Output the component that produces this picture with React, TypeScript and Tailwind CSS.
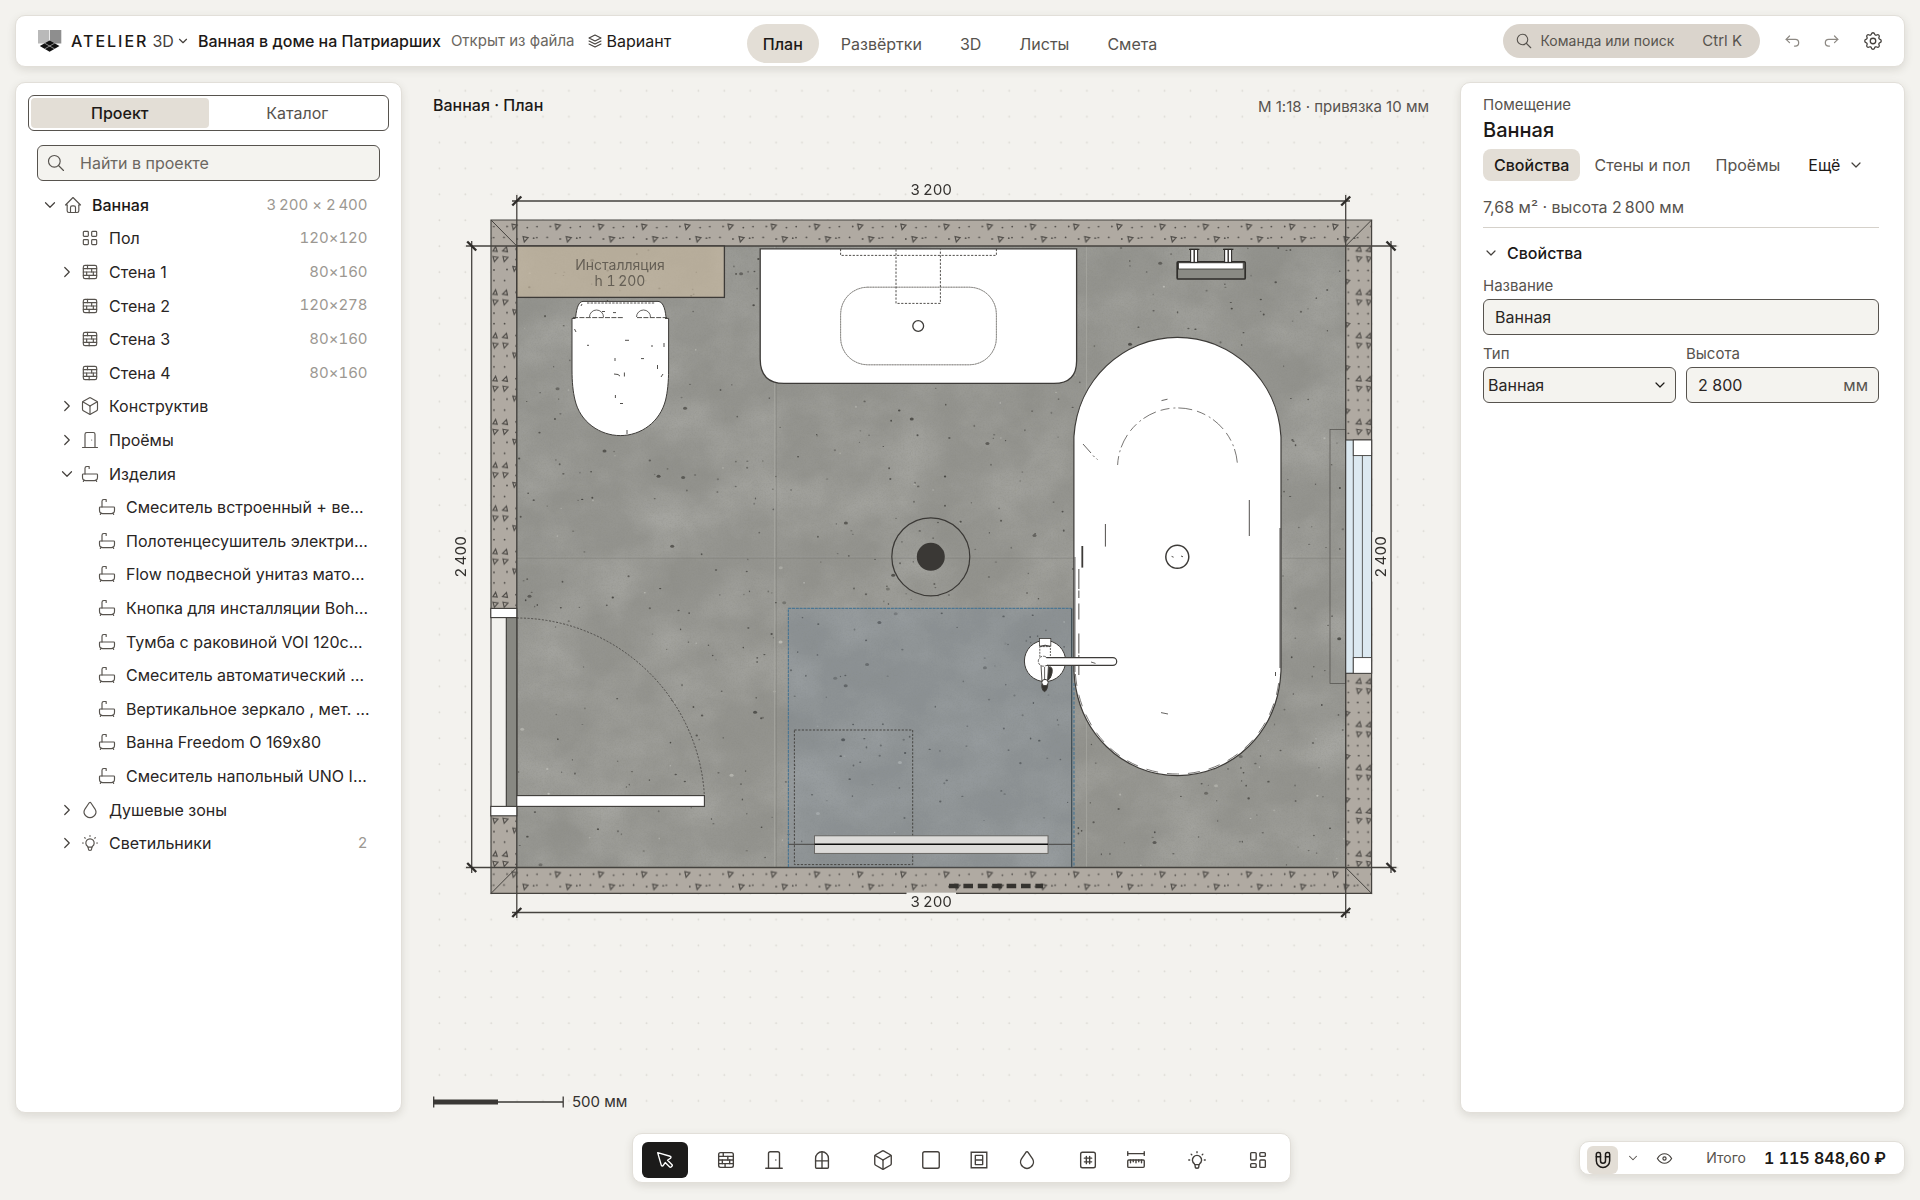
import type { ReactNode } from "react";
import {
  TbArrowBackUp,
  TbArrowForwardUp,
  TbBath,
  TbBulb,
  TbChevronDown,
  TbChevronRight,
  TbCube,
  TbDoor,
  TbDroplet,
  TbEye,
  TbHome,
  TbLayoutDashboard,
  TbLayoutGrid,
  TbMagnet,
  TbPointer,
  TbRulerMeasure,
  TbSearch,
  TbSettings,
  TbSquare,
  TbStack2,
  TbWall,
  TbWindow,
} from "react-icons/tb";

const panel = "rounded-[10px] border border-[#e2dfd9] bg-white shadow-[0_3px_8px_rgba(60,52,40,0.13)]";

/* ---------- Header ---------- */

function Logo() {
  return (
    <svg width="24" height="22" viewBox="0 0 24 22" aria-hidden="true">
      <rect x="0" y="0" width="11.3" height="13.5" fill="#b9b9b9" />
      <rect x="12" y="0" width="11.3" height="13.5" fill="#8e8e8e" />
      <path d="M11.6 10.4 21.5 16 11.6 21.8 1.8 16z" fill="#111" />
      <path d="M6.7 13.2l9.9 5.7M16.6 13.2l-9.9 5.7" stroke="#fff" strokeWidth="0.5" />
    </svg>
  );
}

const views = ["План", "Развёртки", "3D", "Листы", "Смета"];

function Header() {
  return (
    <header className={`${panel} grid h-[52px] grid-cols-[1fr_auto_1fr] items-center`}>
      <div className="flex items-center pl-[22px]">
        <button className="flex items-center text-base font-medium">
          <Logo />
          <span className="ml-[9px] tracking-[2px]">ATELIER</span>
          <span className="ml-1 text-base font-normal text-[#44403c]">3D</span>
          <TbChevronDown size={14} strokeWidth={2} className="ml-[2px] text-[#44403c]" />
        </button>
        <h1 className="ml-2 text-base font-medium whitespace-nowrap">Ванная в доме на Патриарших</h1>
        <span className="ml-[10px] text-[15px] whitespace-nowrap text-[#6b6761]">Открыт из файла</span>
        <button className="ml-3 flex items-center gap-[2px] text-base">
          <TbStack2 size={18} strokeWidth={1.4} className="text-[#44403c]" />
          Вариант
        </button>
      </div>
      <nav className="mb-[3px] flex gap-[6px] self-end">
        {views.map((view) => (
          <button
            key={view}
            className={`h-[39px] rounded-full px-4 text-base ${
              view === "План" ? "bg-[#e3ded6] font-medium text-[#1c1917]" : "text-[#57534e]"
            }`}
          >
            {view}
          </button>
        ))}
      </nav>
      <div className="flex items-center justify-end pr-[10px]">
        <button className="flex h-[34px] items-center rounded-full bg-[#dad4cc] pr-[18px] pl-3 text-sm text-[#57534e]">
          <TbSearch size={18} strokeWidth={1.5} />
          <span className="ml-2">Команда или поиск</span>
          <kbd className="ml-7 font-[inherit] text-[15px]">Ctrl K</kbd>
        </button>
        <button aria-label="Отменить" className="ml-3 grid size-10 place-items-center text-[#8d8983]">
          <TbArrowBackUp size={20} strokeWidth={1.5} />
        </button>
        <button aria-label="Повторить" className="grid size-10 place-items-center text-[#8d8983]">
          <TbArrowForwardUp size={20} strokeWidth={1.5} />
        </button>
        <button aria-label="Настройки" className="grid h-10 w-[42px] place-items-center text-[#44403c]">
          <TbSettings size={22} strokeWidth={1.4} />
        </button>
      </div>
    </header>
  );
}

/* ---------- Left panel ---------- */

type TreeRow = {
  label: string;
  icon: typeof TbHome;
  level: 0 | 1 | 2;
  open?: boolean;
  meta?: string;
};

const tree: TreeRow[] = [
  { label: "Ванная", icon: TbHome, level: 0, open: true, meta: "3\u2009200 × 2\u2009400" },
  { label: "Пол", icon: TbLayoutGrid, level: 1, meta: "120×120" },
  { label: "Стена 1", icon: TbWall, level: 1, open: false, meta: "80×160" },
  { label: "Стена 2", icon: TbWall, level: 1, meta: "120×278" },
  { label: "Стена 3", icon: TbWall, level: 1, meta: "80×160" },
  { label: "Стена 4", icon: TbWall, level: 1, meta: "80×160" },
  { label: "Конструктив", icon: TbCube, level: 1, open: false },
  { label: "Проёмы", icon: TbDoor, level: 1, open: false },
  { label: "Изделия", icon: TbBath, level: 1, open: true },
  { label: "Смеситель встроенный + ве…", icon: TbBath, level: 2 },
  { label: "Полотенцесушитель электри…", icon: TbBath, level: 2 },
  { label: "Flow подвесной унитаз мато…", icon: TbBath, level: 2 },
  { label: "Кнопка для инсталляции Boh…", icon: TbBath, level: 2 },
  { label: "Тумба с раковиной VOI 120с…", icon: TbBath, level: 2 },
  { label: "Смеситель автоматический …", icon: TbBath, level: 2 },
  { label: "Вертикальное зеркало , мет. …", icon: TbBath, level: 2 },
  { label: "Ванна Freedom O 169x80", icon: TbBath, level: 2 },
  { label: "Смеситель напольный UNO I…", icon: TbBath, level: 2 },
  { label: "Душевые зоны", icon: TbDroplet, level: 1, open: false },
  { label: "Светильники", icon: TbBulb, level: 1, open: false, meta: "2" },
];

const indent = ["pl-6", "pl-[41px]", "pl-[58px]"];

function ProjectPanel() {
  return (
    <aside className={`${panel} w-[387px] shrink-0 pt-3`}>
      <div className="mx-3 grid h-9 grid-cols-2 rounded-md border border-[#57534e] p-[2px] text-base">
        <button className="rounded bg-[#e3ded6] font-medium">Проект</button>
        <button className="text-[#57534e]">Каталог</button>
      </div>
      <label className="mx-[21px] mt-[14px] flex h-9 items-center rounded-md border border-[#57534e] bg-[#f4f3ef] pl-2">
        <TbSearch size={20} strokeWidth={1.4} className="shrink-0 text-[#57534e]" />
        <input
          aria-label="Найти в проекте"
          placeholder="Найти в проекте"
          className="ml-[14px] w-full bg-transparent text-base outline-none placeholder:text-[#6b6761]"
        />
      </label>
      <ul className="mt-[7px] grid min-h-[672px] auto-rows-fr">
        {tree.map((row, i) => {
          const Icon = row.icon;
          return (
            <li key={i} className={`flex items-center pr-9 text-base ${indent[row.level]}`}>
              <span className="grid w-5 place-items-center text-[#44403c]">
                {row.open === true && <TbChevronDown size={18} strokeWidth={1.6} />}
                {row.open === false && <TbChevronRight size={18} strokeWidth={1.6} />}
              </span>
              <Icon size={20} strokeWidth={1.4} className="ml-[3px] shrink-0 text-[#57534e]" />
              <span
                className={`ml-[9px] whitespace-nowrap ${
                  row.level === 0 ? "font-medium text-[#1c1917]" : "text-[#292524]"
                }`}
              >
                {row.label}
              </span>
              {row.meta && <span className="mr-[2px] ml-auto text-[15px] text-[#9c9892] tabular-nums">{row.meta}</span>}
            </li>
          );
        })}
      </ul>
    </aside>
  );
}

/* ---------- Plan drawing ---------- */

// small LCG so that the concrete looks the same on every render
function makeSpecks(count: number) {
  let seed = 7;
  const next = () => {
    seed = (seed * 16807) % 2147483647;
    return seed / 2147483647;
  };
  return Array.from({ length: count }, () => {
    const big = next();
    return {
      x: 518 + next() * 826,
      y: 248 + next() * 618,
      rx: big > 0.93 ? 2 : 0.6 + big * 0.7,
      ry: big > 0.93 ? 1.5 : 0.5 + next() * 0.6,
      light: next() > 0.92,
      o: 0.35 + next() * 0.5,
    };
  });
}

const specks = makeSpecks(760);

function Tick({ x, y, flip }: { x: number; y: number; flip?: boolean }) {
  return flip ? (
    <path d={`M${x - 4.5} ${y - 4.5}l9 9`} stroke="#2f2d2a" strokeWidth="2.4" />
  ) : (
    <path d={`M${x - 4.5} ${y + 4.5}l9 -9`} stroke="#2f2d2a" strokeWidth="2.4" />
  );
}

function HatchDefs() {
  const tri = { fill: "none", stroke: "#514e4a", strokeWidth: 1.2 };
  return (
    <defs>
      <pattern id="hatchTop" patternUnits="userSpaceOnUse" x="535.8" y="220" width="43.2" height="26">
        <path d="M19.5 4.2l5 1-3.8 4.4zM30.5 16.6l5 1-3.8 4.400z" {...tri} />
        <g fill="#514e4a">
          <circle cx="14.5" cy="6.5" r="0.9" />
          <circle cx="34.7" cy="7.6" r="0.9" />
          <circle cx="1.2" cy="6.6" r="0.9" />
          <circle cx="1" cy="17.6" r="0.9" />
          <circle cx="11.4" cy="17.4" r="0.9" />
          <circle cx="24.4" cy="19" r="0.9" />
          <circle cx="41" cy="18.2" r="0.9" />
        </g>
      </pattern>
      <pattern id="hatchBottom" href="#hatchTop" y="867.6" />
      <pattern id="hatchLeft" patternUnits="userSpaceOnUse" x="491" y="243.5" width="26" height="43.2">
        <path d="M2 7.5l2.6-4.400 1.6 4.800zM11.5 7.5l4-4 1 4.800zM2 13l5 1-3.6 4.2zM12 13l5 1-3.800 4.2zM21.8 23l4 .6-2.6 4.2z" {...tri} />
        <g fill="#514e4a">
          <circle cx="25" cy="5.6" r="0.9" />
          <circle cx="25" cy="16" r="0.9" />
          <circle cx="3" cy="26.5" r="0.9" />
          <circle cx="16" cy="26" r="0.9" />
          <circle cx="3" cy="37" r="0.9" />
          <circle cx="13.6" cy="37" r="0.9" />
        </g>
      </pattern>
      <pattern id="hatchRight" patternUnits="userSpaceOnUse" x="1345.7" y="243.5" width="26" height="43.2">
        <path d="M10.5 7.5l3.6-4.400 1.4 4.800zM20.5 7.5l4-4 .6 4.800zM11 13l5 1-3.6 4.2zM21 13l4.4 1-3 4.2zM0 35.6l4 1.2-3 3.6z" {...tri} />
        <g fill="#514e4a">
          <circle cx="2.6" cy="5.6" r="0.9" />
          <circle cx="2.6" cy="17" r="0.9" />
          <circle cx="12" cy="27" r="0.9" />
          <circle cx="22.4" cy="27" r="0.9" />
          <circle cx="2.6" cy="27" r="0.9" />
          <circle cx="13" cy="37" r="0.9" />
          <circle cx="22.6" cy="37" r="0.9" />
        </g>
      </pattern>
      <pattern id="dots" patternUnits="userSpaceOnUse" x="504.7" y="233" width="25.9" height="25.9">
        <circle cx="12.4" cy="13.2" r="0.9" fill="#dcdad4" />
      </pattern>
      <filter id="mottle" x="0" y="0" width="1" height="1">
        <feTurbulence type="fractalNoise" baseFrequency="0.014 0.017" numOctaves="5" seed="11" />
        <feColorMatrix values="0 0 0 0 1  0 0 0 0 1  0 0 0 0 0.97  1.1 0 0 0 -0.4" />
      </filter>
      <filter id="shade" x="0" y="0" width="1" height="1">
        <feTurbulence type="fractalNoise" baseFrequency="0.02" numOctaves="4" seed="4" />
        <feColorMatrix values="0 0 0 0 0.2  0 0 0 0 0.2  0 0 0 0 0.18  0 1.1 0 0 -0.4" />
      </filter>
      <filter id="grain" x="0" y="0" width="1" height="1">
        <feTurbulence type="fractalNoise" baseFrequency="0.6" numOctaves="2" seed="2" />
        <feColorMatrix values="0 0 0 0 0.25  0 0 0 0 0.25  0 0 0 0 0.22  0 0 1.2 0 -0.5" />
      </filter>
    </defs>
  );
}

function Floor() {
  return (
    <g>
      <rect x="506" y="246" width="839.7" height="621.6" fill="#959590" />
      <rect x="506" y="246" width="839.7" height="621.6" filter="url(#mottle)" opacity="0.28" />
      <rect x="506" y="246" width="839.7" height="621.6" filter="url(#shade)" opacity="0.34" />
      <rect x="506" y="246" width="839.7" height="621.6" filter="url(#grain)" opacity="0.5" />
      {specks.map((s, i) => (
        <ellipse key={i} cx={s.x} cy={s.y} rx={s.rx} ry={s.ry} fill={s.light ? "#c4c4be" : "#3c3b37"} opacity={s.o} />
      ))}
      <g stroke="#a5a59f" strokeWidth="1" opacity="0.8">
        <path d="M774.5 246V867.5M1086.5 246V867.5" />
        <path d="M517 556.8H1345.7" opacity="0.35" />
      </g>
      <path d="M776.5 246V867.5M517 558.3H1345.7" stroke="#7b7b75" opacity="0.4" />
    </g>
  );
}

function Walls() {
  return (
    <g>
      <path fill="#b0aaa2" fillRule="evenodd" d="M491 220H1371.6V893.4H491zM516.8 246V867.5H1345.7V246z" />
      <rect x="491" y="220" width="880.6" height="26" fill="url(#hatchTop)" />
      <rect x="491" y="867.5" width="880.6" height="26" fill="url(#hatchBottom)" />
      <rect x="491" y="246" width="25.8" height="621.5" fill="url(#hatchLeft)" />
      <rect x="1345.7" y="246" width="25.9" height="621.5" fill="url(#hatchRight)" />
      <g fill="none" stroke="#45433f" strokeWidth="1.2">
        <path d="M491 220H1371.6V893.4H491z" />
        <path d="M516.8 246H1345.7V867.5H516.8z" strokeWidth="1.4" />
        <path d="M491 220l25.8 26M1371.6 220l-25.9 26M491 893.4l25.8-25.9M1371.6 893.4l-25.9-25.9" strokeWidth="1" />
      </g>
      <path d="M949 886h94" stroke="#35332f" strokeWidth="4.4" strokeDasharray="9.6 4.8" />
    </g>
  );
}

function DoorAndWindow() {
  return (
    <g stroke="#3d3b38" strokeWidth="1.1">
      {/* door */}
      <rect x="490" y="617" width="16.3" height="190" fill="#f3f2ee" stroke="none" />
      <rect x="506.3" y="617" width="10.4" height="190" fill="#888882" stroke="none" />
      <path d="M491 617v190M506.3 617v190M516.8 617v190" fill="none" />
      <rect x="490.8" y="608.4" width="26" height="9.2" fill="#fff" />
      <rect x="490.8" y="806.4" width="26" height="9.4" fill="#fff" />
      <path d="M516.8 618A188 188 0 0 1 704.4 796" fill="none" strokeDasharray="2 1.6" strokeWidth="0.8" />
      <rect x="516.8" y="795.6" width="187.6" height="10.8" fill="#fff" />
      {/* window */}
      <rect x="1330" y="429.5" width="15.7" height="254" fill="none" strokeWidth="0.7" opacity="0.8" />
      <rect x="1345.7" y="440" width="25.9" height="233.3" fill="#dce9f1" />
      <path d="M1353.3 440v233M1362.4 455v203" strokeWidth="0.8" />
      <rect x="1353.3" y="440" width="18.3" height="15.6" fill="#fff" strokeWidth="0.9" />
      <rect x="1353.3" y="657.6" width="18.3" height="15.7" fill="#fff" strokeWidth="0.9" />
    </g>
  );
}

function Installation() {
  return (
    <g>
      <rect x="516.8" y="246" width="207.6" height="51.4" fill="#cdbda3" fillOpacity="0.62" stroke="#3d3b38" strokeWidth="1.3" />
      <g className="tabular-nums" fill="#655f55" fontSize="14" textAnchor="middle">
        <text x="620" y="270">Инсталляция</text>
        <text x="620" y="286">{"h 1\u2009200"}</text>
      </g>
    </g>
  );
}

function Toilet() {
  return (
    <g fill="#fff" stroke="#3d3b38" strokeWidth="1">
      <path d="M575.5 319C576 312 577.5 301.4 583 301.4H658C664 301.4 665.6 312 666.2 319" />
      <path d="M575 318.4H572V370C572 382 573 392 575 400C580 422 600 435.6 620.3 435.6C641 435.6 660 422 665.6 400C667.5 392 668.6 382 668.6 370V318.4H665" />
      <g fill="none" strokeWidth="0.9">
        <path d="M587 303h68" strokeDasharray="2.4 1.2" />
        <path d="M573 317.6h50M637 317.6h30" strokeDasharray="5 1.4" />
        <path d="M589.5 317a7 7 0 0 1 14 0M636.5 317a7 7 0 0 1 14 0" strokeWidth="0.8" />
        <path d="M602 311.5h3M613 312.6h3M625 340.3h4M587 345.3h2M651 346h2M664 343v4M615 358v3M641 358.6h3M657.5 365v4M614 374l4 .5 2 1.6M624.4 372.5v4M661 377l2-3M574.5 329l1.5 3M615.4 395v3M620 403.5h3M627 430v4M581 306l1-2" />
      </g>
    </g>
  );
}

function Vanity() {
  return (
    <g fill="#fff" stroke="#3d3b38" strokeWidth="1.3">
      <path d="M760.2 248.8H1076.6V361Q1076.6 383.4 1054 383.4H784Q760.2 383.4 760.2 359z" />
      <g fill="none" strokeWidth="0.9">
        <rect x="840.6" y="287.2" width="155.8" height="77.6" rx="27" stroke="#6b6964" strokeWidth="0.6" />
        <rect x="840.6" y="287.2" width="155.8" height="77.6" rx="27" stroke="#6b6964" strokeDasharray="1.2 1.4" opacity="0.6" />
        <path d="M840.6 249v6.4H996.4V249M896 249.4v54H940.4v-54" strokeDasharray="2.2 1.5" />
        <circle cx="918.2" cy="326" r="5.4" strokeWidth="1.3" />
      </g>
    </g>
  );
}

function TowelRail() {
  return (
    <g stroke="#2f2d2a">
      <rect x="1177.2" y="261.8" width="68" height="17.2" rx="1" fill="#8a8a84" strokeWidth="1.7" />
      <rect x="1178.6" y="262.8" width="64.6" height="6.2" fill="#fff" strokeWidth="0.8" />
      <g fill="#fff" strokeWidth="1.1">
        <rect x="1190.6" y="249.4" width="7" height="13" />
        <rect x="1224.6" y="249.4" width="7" height="13" />
      </g>
      <path d="M1189 249.4h10.4M1223 249.4h10.4M1194.2 250v12M1228.2 250v12" strokeWidth="1.4" />
    </g>
  );
}

function Bathtub() {
  return (
    <g fill="none" stroke="#3d3b38" strokeWidth="0.9">
      <path d="M1073.9 437.5C1077 380 1123 337.4 1177.4 337.4C1232 337.4 1278 380 1281 437.5V671C1278 733 1232 775.6 1177.4 775.6C1123 775.6 1077 733 1073.9 671z" fill="#fff" strokeWidth="1.2" />
      <path d="M1075.4 674C1080 733 1124 774 1177.4 774C1231 774 1276 732 1279.6 674" strokeDasharray="12 9" strokeWidth="0.7" />
      <path d="M1117.6 465A60 60 0 0 1 1237.4 464" strokeDasharray="9 4 2 3 14 5" strokeWidth="0.7" />
      <path d="M1083 444l8 9M1093 455.5l1.5 1.5M1096.5 458.6l1 1M1161.5 400.6l6-1.4M1161 712.6l7 1.4" strokeWidth="0.8" />
      <path d="M1105.4 524v22.6M1249.3 500v36M1280 528v140" />
      <path d="M1082.3 546v21.6" strokeWidth="1.8" />
      <path d="M1075 557v115" strokeWidth="1" opacity="0.7" />
      <path d="M1078.8 569v29M1078.8 603.5v16M1078.8 633.5v42" strokeWidth="1.4" opacity="0.65" strokeDasharray="20 1.5" />
      <path d="M1275.5 672v4" />
      <circle cx="1177.3" cy="556.8" r="11.5" strokeWidth="1.5" />
      <path d="M1171.6 556.4l2 .8M1181 556l2 .8" />
    </g>
  );
}

function Shower() {
  return (
    <g fill="none">
      <rect x="788.4" y="608.4" width="285.4" height="259" fill="#738ba2" fillOpacity="0.24" />
      <path d="M788.4 867V608.4H1071.7" stroke="#4b7692" strokeWidth="1.2" strokeDasharray="3 0.8" />
      <path d="M1071.7 608.4V867" stroke="#3b4a52" strokeWidth="1.2" />
      <path d="M1074 683V867" stroke="#4b7692" strokeWidth="1.2" strokeDasharray="3 1.6" />
      <rect x="794.4" y="730" width="118.3" height="134.6" stroke="#3d3b38" strokeWidth="0.9" strokeDasharray="2.2 1.5" />
      <path d="M788.4 844.3H1072" stroke="#3d3b38" strokeWidth="0.9" />
      <rect x="814.5" y="835.8" width="233.5" height="17.6" fill="#dcdbd9" stroke="#63615d" strokeWidth="0.9" />
      <path d="M814.5 844.3H1048" stroke="#0c0c0c" strokeWidth="1.5" />
    </g>
  );
}

function FloorMixer() {
  return (
    <g fill="#fff" stroke="#3d3b38" strokeWidth="1">
      <circle cx="1045" cy="661" r="20.6" />
      <path d="M1049 667q4-1 3 6-1 6-5 8z" fill="#35332f" />
      <path d="M1045 682c5 0 2 9-.4 9.6c-3-.6-4.6-9.6.4-9.6z" fill="#35332f" />
      <rect x="1039.4" y="638.6" width="11.4" height="7.4" strokeWidth="0.8" />
      <rect x="1039.8" y="646.6" width="10.6" height="14" strokeWidth="0.8" strokeDasharray="2 1" />
      <path d="M1040.5 646.5q4.6-2.6 9.4 0" fill="none" />
      <path d="M1041 665h7.5l-1 17h-5.5z" strokeWidth="0.9" />
      <path d="M1044.6 667v13" strokeWidth="0.8" />
      <path d="M1045 657.6h67.8a3.9 3.9 0 0 1 0 7.8H1045z" strokeWidth="1.2" />
      <path d="M1046 657a5 5 0 1 0-3 9.2q3 0 5-1.4" strokeDasharray="3 1" strokeWidth="0.8" />
      <circle cx="1045" cy="682.6" r="3.2" />
      <path d="M1091 662l4.5 1.4" strokeWidth="0.8" />
    </g>
  );
}

function Lamp() {
  return (
    <g>
      <circle cx="930.8" cy="556.8" r="39" fill="none" stroke="#3a3835" strokeWidth="1.2" />
      <circle cx="930.8" cy="556.8" r="14" fill="#3a3835" />
    </g>
  );
}

function Dimensions() {
  const paper = "#f3f2ee";
  return (
    <g>
      <g stroke="#45433f" strokeWidth="1.3" fill="none">
        <path d="M512 201H1350M516.8 195V246M1345.7 195V246" />
        <path d="M512 912.5H1350M516.8 867.5V918M1345.7 867.5V918" />
        <path d="M471.7 241V873M466 246H516.8M466 867.5H516.8" />
        <path d="M1391 241V873M1345.7 246H1396.5M1345.7 867.5H1396.5" />
      </g>
      <Tick x={516.8} y={201} />
      <Tick x={1345.7} y={201} />
      <Tick x={516.8} y={912.5} />
      <Tick x={1345.7} y={912.5} />
      <Tick x={471.7} y={246} flip />
      <Tick x={471.7} y={867.5} flip />
      <Tick x={1391} y={246} flip />
      <Tick x={1391} y={867.5} flip />
      <rect x="906.5" y="892.5" width="49.5" height="17" fill={paper} />
      <rect x="1372.4" y="532" width="16" height="49.5" fill={paper} />
      <g className="tabular-nums" fill="#33312e" fontSize="15" textAnchor="middle">
        <text x="931.3" y="195.3">{"3\u2009200"}</text>
        <text x="931.3" y="907.4">{"3\u2009200"}</text>
        <text transform="translate(466 556.8) rotate(-90)">{"2\u2009400"}</text>
        <text transform="translate(1385.5 556.8) rotate(-90)">{"2\u2009400"}</text>
      </g>
    </g>
  );
}

function PlanCanvas() {
  return (
    <main className="relative flex min-w-0 flex-1 flex-col justify-between px-4 pt-3">
      <svg className="absolute inset-0 size-full" viewBox="417 82 1028 1031" role="img" aria-label="План ванной">
        <HatchDefs />
        <rect x="430" y="82" width="1004" height="1025" fill="url(#dots)" />
        <Floor />
        <Walls />
        <Installation />
        <Toilet />
        <Vanity />
        <TowelRail />
        <Shower />
        <Bathtub />
        <DoorAndWindow />
        <FloorMixer />
        <Lamp />
        <Dimensions />
      </svg>
      <div className="relative flex justify-between">
        <h2 className="text-base leading-[22px] font-medium">Ванная · План</h2>
        <p className="text-[15px] leading-[26px] text-[#57534e]">М 1:18 · привязка 10 мм</p>
      </div>
      <div className="relative flex items-center gap-2 text-[15px] text-[#33312e]">
        <svg width="131" height="12" viewBox="0 0 131 12" aria-hidden="true">
          <path d="M.7.5v11M130.2.5v11M0 6h130" stroke="#3a3835" strokeWidth="1.3" />
          <path d="M0 6h65" stroke="#3a3835" strokeWidth="5" />
        </svg>
        500 мм
      </div>
    </main>
  );
}

/* ---------- Right panel ---------- */

const field = "h-9 w-full rounded-md border border-[#57534e] bg-[#f4f3ef] text-base text-[#292524] outline-none";

function PropertiesPanel() {
  return (
    <aside className={`${panel} w-[445px] shrink-0 pt-[11px] pr-[25px] pl-[22px]`}>
      <p className="text-[15px] leading-[22px] text-[#57534e]">Помещение</p>
      <h2 className="text-xl leading-7 font-medium">Ванная</h2>
      <div className="mt-[5px] flex h-8 gap-[3px] text-base text-[#57534e]">
        <button className="rounded-lg bg-[#e3ded6] px-[11px] font-medium text-[#1c1917]">Свойства</button>
        <button className="px-[11px]">Стены и пол</button>
        <button className="px-[11px]">Проёмы</button>
        <button className="flex items-center gap-2 pl-[14px] text-[#1c1917]">
          Ещё
          <TbChevronDown size={16} strokeWidth={1.8} className="text-[#44403c]" />
        </button>
      </div>
      <p className="mt-[14px] border-b border-[#d5d1ca] pb-2 text-base text-[#57534e]">{"7,68 м² · высота 2\u2009800 мм"}</p>
      <button className="mt-[13px] flex items-center gap-2 text-base font-medium">
        <TbChevronDown size={16} strokeWidth={1.8} className="text-[#44403c]" />
        Свойства
      </button>
      <label htmlFor="name" className="mt-[10px] block text-[15px] leading-[22px] text-[#57534e]">
        Название
      </label>
      <input id="name" defaultValue="Ванная" className={`${field} mt-[2px] px-[11px]`} />
      <div className="mt-2 grid grid-cols-2 gap-[10px]">
        <div>
          <label htmlFor="type" className="block text-[15px] leading-[22px] text-[#57534e]">
            Тип
          </label>
          <div className="relative mt-[2px]">
            <select id="type" className={`${field} appearance-none pl-1`}>
              <option>Ванная</option>
            </select>
            <TbChevronDown size={16} strokeWidth={1.8} className="pointer-events-none absolute top-[10px] right-2" />
          </div>
        </div>
        <div>
          <label htmlFor="height" className="block text-[15px] leading-[22px] text-[#57534e]">
            Высота
          </label>
          <div className={`${field} mt-[2px] flex items-center pr-[10px] pl-[11px]`}>
            <input id="height" defaultValue="2 800" className="w-full min-w-0 bg-transparent outline-none" />
            <span className="text-[#57534e]">мм</span>
          </div>
        </div>
      </div>
    </aside>
  );
}

/* ---------- Bottom bar ---------- */

function StrokeIcon({ children }: { children: ReactNode }) {
  return (
    <svg width="22" height="22" viewBox="0 0 24 24" fill="none" stroke="currentColor" strokeWidth="1.5" strokeLinecap="round" strokeLinejoin="round">
      {children}
    </svg>
  );
}

function NicheIcon() {
  return (
    <StrokeIcon>
      <path d="M3.5 3.5h17v17h-17z" strokeLinejoin="miter" />
      <path d="M8 7h8v10H8zM8 12h8" />
    </StrokeIcon>
  );
}

function GridIcon() {
  return (
    <StrokeIcon>
      <rect x="4" y="3.5" width="16" height="17" rx="2" />
      <path d="M8 10h8M8 14h8M10.2 8v8M13.8 8v8" />
    </StrokeIcon>
  );
}

const tool = (Icon: typeof TbHome) => <Icon size={22} strokeWidth={1.5} />;

const toolGroups: { label: string; icon: ReactNode }[][] = [
  [{ label: "Выбор", icon: tool(TbPointer) }],
  [
    { label: "Стена", icon: tool(TbWall) },
    { label: "Дверь", icon: tool(TbDoor) },
    { label: "Окно", icon: tool(TbWindow) },
  ],
  [
    { label: "Короб", icon: tool(TbCube) },
    { label: "Плоскость", icon: tool(TbSquare) },
    { label: "Ниша", icon: <NicheIcon /> },
    { label: "Душ", icon: tool(TbDroplet) },
  ],
  [
    { label: "Раскладка", icon: <GridIcon /> },
    { label: "Размер", icon: tool(TbRulerMeasure) },
  ],
  [{ label: "Свет", icon: tool(TbBulb) }],
  [{ label: "Каталог", icon: tool(TbLayoutDashboard) }],
];

function BottomBar() {
  return (
    <footer className="mt-[5px] grid grid-cols-[1fr_auto_1fr] items-center">
      <div />
      <div className={`${panel} ml-[2px] flex gap-[15px] px-[9px] pt-2 pb-1`}>
        {toolGroups.map((group, g) => (
          <div key={g} className="flex gap-[2px]">
            {group.map((item) => (
              <button
                key={item.label}
                aria-label={item.label}
                className={`grid h-9 w-[46px] place-items-center rounded-md ${
                  item.label === "Выбор" ? "bg-[#1c1b1a] text-white" : "text-[#44403c]"
                }`}
              >
                {item.icon}
              </button>
            ))}
          </div>
        ))}
      </div>
      <div className={`${panel} flex h-[34px] items-center justify-self-end pr-[18px] pl-[7px]`}>
        <button aria-label="Привязка" className="mt-1 grid h-7 w-[31px] place-items-center rounded-md bg-[#e3ded6]">
          <TbMagnet size={20} strokeWidth={1.8} />
        </button>
        <button aria-label="Параметры привязки" className="ml-2 text-[#57534e]">
          <TbChevronDown size={14} strokeWidth={1.8} />
        </button>
        <button aria-label="Видимость" className="ml-[15px] text-[#44403c]">
          <TbEye size={19} strokeWidth={1.5} />
        </button>
        <span className="ml-8 text-sm text-[#57534e]">Итого</span>
        <strong className="ml-[18px] text-base font-semibold tabular-nums">1 115 848,60 ₽</strong>
      </div>
    </footer>
  );
}

export default function App() {
  return (
    <div className="flex min-h-screen flex-col gap-[15px] bg-[#f3f2ee] px-[15px] pt-[15px] pb-[17px] font-[Inter,'Noto_Sans',sans-serif] text-[#1c1917] [font-feature-settings:'calt'_0]">
      <Header />
      <div className="flex flex-1 gap-[15px]">
        <ProjectPanel />
        <PlanCanvas />
        <PropertiesPanel />
      </div>
      <BottomBar />
    </div>
  );
}
